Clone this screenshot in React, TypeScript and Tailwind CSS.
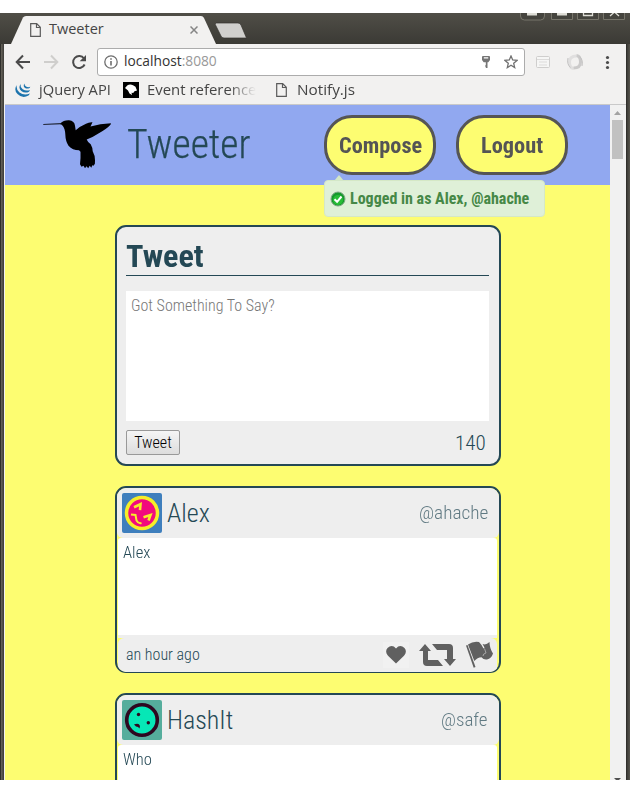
import { useLayoutEffect, useRef, useState } from "react";
import type { ReactNode } from "react";

// Fits one line of text to a given width by condensing its glyphs.
function Fit({ w, className = "", children }: { w: number; className?: string; children: ReactNode }) {
  const ref = useRef<HTMLSpanElement>(null);
  const [scale, setScale] = useState(1);
  useLayoutEffect(() => {
    if (ref.current) setScale(w / ref.current.offsetWidth);
  }, [w]);
  return (
    <span className="block shrink-0 whitespace-nowrap" style={{ width: w }}>
      <span ref={ref} className={"inline-block origin-left align-top " + className} style={{ transform: `scaleX(${scale})` }}>
        {children}
      </span>
    </span>
  );
}

const PageIcon = () => (
  <svg width="11" height="14" viewBox="0 0 11 14" className="shrink-0" fill="none" stroke="#5a5a5a" strokeWidth="1.2">
    <path d="M.7.7h6l3.6 3.6v9H.7zM6.5.9v3.6h3.6" />
  </svg>
);

function TitleBar() {
  return (
    <div className="relative h-[31px] bg-linear-to-b from-[#504e47] to-[#3b3a35]">
      <svg className="absolute left-0 top-0" width="630" height="31" viewBox="0 13 630 31">
        <path d="M11 44L23 17.500Q24 16 26 16H201Q203 16 204 18L216 44Z" fill="#f2f1f0" />
        <path d="M216 23H238Q240 23 241 25L246.500 38H224Q221.500 38 221 36L215 24Z" fill="#d0cfcd" stroke="#33322e" strokeWidth=".7" />
        <g fill="#45443e" stroke="#77756b" strokeWidth="1">
          <path d="M520.500 12v4q0 4 4 4h16q4 0 4-4v-4" />
          <path d="M551.500 12v7.500h21V12M577.500 12v7.500h21V12M603.500 12v7.500h21V12" />
        </g>
        <path d="M527 13h10v2.500h-10zM557 13h10v2.500h-10z" fill="#deddd6" />
        <path d="M583.500 12v3.500h9V12M610 16l4.500-4 4.500 4" fill="none" stroke="#deddd6" strokeWidth="1.300" />
      </svg>
      <div className="relative flex h-[33px] items-center pl-[30px]">
        <PageIcon />
        <div className="w-2" />
        <Fit w={55} className="translate-y-px text-[14.5px] leading-[20px] text-[#454545]">Tweeter</Fit>
        <svg className="ml-[86px]" width="8" height="8" viewBox="0 0 8 8" stroke="#858585" strokeWidth="1.500">
          <path d="M.5.5l7 7M7.500.5l-7 7" />
        </svg>
      </div>
    </div>
  );
}

function Toolbar() {
  return (
    <div className="h-[61px] border-b border-[#c9c9c9] bg-[#f2f1f0]">
      <div className="flex h-[36px] items-center">
        <svg width="92" height="28" viewBox="5 48 92 28" className="shrink-0" fill="none" strokeWidth="2">
          <path d="M30 62H17M23 55.500L16.700 62l6.300 6.500" stroke="#4b4b4b" />
          <path d="M44 62h13M51 55.500l6.300 6.500-6.300 6.500" stroke="#cfcecc" />
          <path d="M84 58.500a6 6 0 1 0 .6 6" stroke="#4b4b4b" />
          <path d="M86 55v6.300h-6.300z" fill="#4b4b4b" />
        </svg>
        <div className="flex h-[28px] w-[428px] shrink-0 items-center rounded-[3px] border border-[#acacac] bg-white pl-[6px] pr-[6px]">
          <svg width="14" height="14" viewBox="0 0 14 14" className="shrink-0" fill="none" stroke="#6e6e6e" strokeWidth="1.300">
            <circle cx="7" cy="7" r="6.200" />
            <path d="M7 6v4.500M7 3.300v1.500" strokeWidth="1.600" />
          </svg>
          <div className="w-[6px]" />
          <Fit w={93} className="translate-y-px text-[14.5px] leading-[20px] text-[#333]">localhost<span className="text-[#999]">:8080</span></Fit>
          <div className="flex-1" />
          <svg width="8" height="13" viewBox="0 0 8 13" fill="#757575">
            <path fillRule="evenodd" d="M1 0h6q1 0 1 1v3L6.300 6.200H5.500V12H3.800v-1.500H3V9.500h.8V6.200H1.700L0 4V1q0-1 1-1zm.8 1.200v1.200h4.400V1.200z" />
          </svg>
          <svg className="ml-[14px]" width="14" height="14" viewBox="0 0 14 14" fill="none" stroke="#707070" strokeWidth="1.300">
            <path d="M7 1l1.700 4 4.300.4-3.300 2.900 1 4.300L7 10.300l-3.700 2.300 1-4.300L1 5.400 5.300 5z" />
          </svg>
        </div>
        <svg width="96" height="28" viewBox="525 48 96 28" className="shrink-0">
          <rect x="536.500" y="56.500" width="13" height="11" rx="1" fill="#f6f6f5" stroke="#cfcecd" />
          <path d="M537 59.500h12M539 62h8M539 65h8" stroke="#dcdbda" />
          <g fill="none" stroke="#e0dfdf" strokeWidth="3">
            <path d="M576.500 56q-7 0-7 6t4 6.500" />
            <path d="M573.500 68q7 0 7-6t-4-6.500" stroke="#cbcaca" />
          </g>
          <path d="M568 58q-1.500 6 2.500 9.500M582 66q1.500-6-2.500-9.500" fill="none" stroke="#c3c2c2" />
          <g fill="#4b4b4b"><circle cx="607.500" cy="57.500" r="1.600" /><circle cx="607.500" cy="62.500" r="1.600" /><circle cx="607.500" cy="67.500" r="1.600" /></g>
        </svg>
      </div>
      <div className="flex h-[20px] items-center pl-[10px] text-[14.5px] leading-[20px] text-[#454545]">
        <svg width="16" height="15" viewBox="0 0 16 15" fill="#1d74ad">
          <path d="M1.700 2Q-1.500 7 2.500 11q5 5 11 1.500l1.500-2Q9 13 4.500 9.500 1 6.500 1.700 2z" />
          <path d="M5.500 1Q3 5 6.300 8q3.700 2.800 7.700.700l1-1.700Q11 8.500 7.700 6.200 5 4 5.500 1z" />
          <path d="M9.500.5Q7.700 3.200 10 4.900q2.300 1.300 4.500.1l.8-1.200Q13 4.600 11 3.500 9.300 2.300 9.500.5z" />
        </svg>
        <div className="w-[8px]" />
        <Fit w={72}>jQuery API</Fit>
        <svg className="ml-[12px]" width="16" height="16" viewBox="0 0 16 16">
          <path d="M0 0h16v16H0z" />
          <path d="M2 6l2.200-2.500Q7 1.700 10 3.300l2.500 1.500 1.500 3.700-2.500.7-1.300 1.800-1.700-.3.500 2.300-2.500-1.500L5 8.500z" fill="#fff" />
        </svg>
        <div className="w-[8px]" />
        <div className="mask-r-from-75% mask-r-to-100%"><Fit w={109}>Event reference</Fit></div>
        <div className="w-[20px]" />
        <PageIcon />
        <div className="w-[10px]" />
        <Fit w={58}>Notify.js</Fit>
      </div>
    </div>
  );
}

function HeaderButton({ label, w }: { label: string; w: number }) {
  return (
    <div className="flex h-[60px] w-[112px] items-center justify-center rounded-[28px] border-3 border-[#555] bg-[#fdfd71] text-[22px] font-bold text-[#555]">
      <Fit w={w}>{label}</Fit>
    </div>
  );
}

function Header() {
  return (
    <header className="relative flex h-[80px] items-center bg-[#91a8f0]">
      <svg className="ml-[37px] shrink-0" width="72" height="52" viewBox="42 117.800 72 52">
        <path d="M43 122.800L60.500 122Q63.500 118.800 69 119Q74.500 119.500 75 124.500L75.700 129Q80 125 86 122.500Q89 120.700 92.500 121L90.500 125.200Q100 122.500 111 122L110.500 123.500Q107 127.500 98 132.500Q92 136.500 86.700 138.200Q87.500 140.500 90.700 143Q92.500 146 92.700 150Q95 154 95 159L94.900 162.500L93.500 164.500L92.300 164L91.300 166.500L89.700 164.500L88.200 167L86.500 165L85 167L83.500 164.500L81.500 165.500L80 163Q80.800 157 80.500 150.500L79 149Q72.500 149 68.500 144.500Q65.500 140 65.300 133Q65 127.500 63 125Q62 123.300 60 123.100L43.500 123.500Z" />
      </svg>
      <div className="w-[13px]" />
      <Fit w={124} className="text-[40px] leading-[78px] font-light text-[#244855] [-webkit-text-stroke:0.25px_#244855]">Tweeter</Fit>
      <div className="ml-[73px] flex gap-5">
        <HeaderButton label="Compose" w={83} />
        <HeaderButton label="Logout" w={62} />
      </div>
      <div className="absolute left-[319px] top-[70px]">
        <div className="ml-[10px] h-[6px] w-[10px] bg-[#d3e7c7] [clip-path:polygon(50%_0,100%_100%,0_100%)]" />
        <div className="-mt-px flex h-[37px] w-[221px] items-center rounded-[4px] border border-[#d5e8c6] bg-[#dff0d8] pl-[5px] text-[16px] font-bold text-[#468847]">
          <svg width="16" height="16" viewBox="0 0 16 16" className="shrink-0">
            <circle cx="8" cy="8" r="7" fill="#159a2c" stroke="#7fa886" />
            <circle cx="8" cy="9" r="5" fill="#27bd37" />
            <path d="M4.500 8.200l2.600 2.600 4.400-5.300" fill="none" stroke="#fff" strokeWidth="2" />
          </svg>
          <div className="w-[4px]" />
          <Fit w={179}>Logged in as Alex, @ahache</Fit>
        </div>
      </div>
    </header>
  );
}

const AlexAvatar = () => (
  <svg width="40" height="40" viewBox="0 0 40 40" className="shrink-0 rounded-[2px]">
    <path fill="#3f7fbd" d="M0 0h40v40H0z" />
    <circle cx="20" cy="20" r="15.500" fill="#f20a7d" stroke="#f6ed28" strokeWidth="3.500" />
    <g fill="none" stroke="#f6ed28">
      <path d="M12 14.200l6.500-3-.5 6" strokeWidth="2.600" />
      <path d="M21.500 24.200l7-2.200-2 5.500" strokeWidth="2.600" />
      <path d="M9 21.500l4.500.5 1 5.500q2 3.500 5 2.500" strokeWidth="2" />
    </g>
  </svg>
);

const HashAvatar = () => (
  <svg width="40" height="40" viewBox="0 0 40 40" className="shrink-0 rounded-[2px]">
    <path fill="#55ad9c" d="M0 0h40v40H0z" />
    <circle cx="20" cy="20" r="15.300" fill="#06e7b6" stroke="#2d0820" strokeWidth="3.600" />
    <g fill="#2d0820">
      <circle cx="16.500" cy="14.500" r="1.700" />
      <circle cx="26.300" cy="22.800" r="1.700" />
      <path d="M12 24.500q5-2 6 1.500l-.5 2.500-1.500-1.500q-2 0-4-2.500z" />
    </g>
  </svg>
);

interface TweetProps {
  avatar: ReactNode;
  name: string;
  nameW: number;
  handle: string;
  handleW: number;
  body: string;
  bodyW: number;
  age?: string;
}

function TweetFooter({ age }: { age: string }) {
  return (
    <>
      <div className="ml-px mr-[2px] h-[3px] bg-[#eee]" />
      <div className="ml-px mr-[2px] flex h-[35px] rounded-t-[6px] bg-[#eee] pl-[8px]">
        <Fit w={74} className="text-[16px] leading-[33px] font-light text-[#244855]">{age}</Fit>
        <svg className="ml-auto mr-px shrink-0" width="114" height="33" viewBox="382 638 114 33" fill="#606060">
          <path d="M383 642h26v26h-26z" fill="#f1f1f1" />
          <path d="M396 663.500L388 655.800Q384.500 651.500 387.500 648Q392 644 396 648.500Q400 644 404.500 648Q407.500 651.500 404 655.800Z" />
          <path d="M425 644l6 7h-3v9h10l5 6h-16q-4 0-4-4v-11h-4z" />
          <path d="M432 644h17q4 0 4 4v11h3l-6 7-6-7h3v-9h-10z" />
          <path d="M466 645.500l1.500-.5 8 22-1.800.7z" />
          <path d="M468 644.500Q473 641 479 642Q481.500 644.500 483.500 648.500L484.500 647.500L482.500 644Q486 645.500 489.500 642Q489.500 648 493 653.500Q491.500 658.500 487 659.500Q483.500 660 481.500 657.200Q477.500 657.200 474.300 661Z" />
          <path d="M484.500 648.500l1.500 4.500q-3 .5-3 3" fill="none" stroke="#b5b5b5" strokeWidth=".8" />
        </svg>
      </div>
    </>
  );
}

function Tweet({ avatar, name, nameW, handle, handleW, body, bodyW, age }: TweetProps) {
  return (
    <article className="h-[187px] w-[386px] shrink-0 overflow-hidden rounded-[11px] border-2 border-b-[1.5px] border-[#244855]">
      <div className="flex h-[50px] items-center rounded-b-[6px] bg-[#eee] pl-[5px] pr-[11px]">
        {avatar}
        <div className="w-[5px]" />
        <Fit w={nameW} className="text-[26px] font-light text-[#244855]">{name}</Fit>
        <div className="flex-1" />
        <Fit w={handleW} className="text-[19px] font-light text-[#244855] opacity-70">{handle}</Fit>
      </div>
      <div className="ml-px mr-[2px] h-[97px] rounded-t-[3px] bg-white pl-[5px] pt-[5px]">
        <Fit w={bodyW} className="text-[16px] leading-[19px] font-light text-[#244855]">{body}</Fit>
      </div>
      {age && <TweetFooter age={age} />}
    </article>
  );
}

export default function App() {
  return (
    <div className="h-[793px] w-[630px] overflow-hidden bg-white pt-[13px] font-['Open_Sans','Noto_Sans',sans-serif]">
      <div className="h-[767px] overflow-hidden bg-[#3c3b37]">
        <TitleBar />
        <div className="flex h-[736px]">
          <div className="w-[4px] shrink-0 border-l border-[#302f2c] bg-linear-to-r from-[#69665d] to-[#3c3b37]" />
          <div className="w-[622px] shrink-0 bg-[#f2f1f0] pl-px">
            <Toolbar />
            <div className="flex h-[675px]">
              <main className="h-[675px] w-[605px] shrink-0 overflow-hidden bg-[#fdfd71] font-['Roboto_Condensed',Roboto,sans-serif] font-stretch-75%">
                <Header />
                <div className="flex flex-col items-start pl-[110px] pt-[40px]">
                  <section className="h-[241px] w-[386px] shrink-0 rounded-[11px] border-2 border-[#244855] bg-[#eee] px-[9px] pt-[12px]">
                    <div className="mr-px h-[37px] border-b border-[#244855]">
                      <Fit w={78} className="text-[30.5px] leading-[35px] font-bold text-[#244855]">Tweet</Fit>
                    </div>
                    <div className="mr-px mt-[15px] h-[130px] bg-white pl-[5px] pt-[5px]">
                      <Fit w={144} className="text-[16px] leading-[19px] font-light text-[#777]">Got Something To Say?</Fit>
                    </div>
                    <div className="mt-[9px] flex h-[25px] items-center justify-between pr-[4px]">
                      <button className="flex h-[25px] w-[54px] items-center justify-center rounded-[2px] border border-[#999] bg-linear-to-b from-[#f5f5f5] to-[#ddd]">
                        <Fit w={38} className="text-[16px] leading-[23px] text-black font-light">Tweet</Fit>
                      </button>
                      <Fit w={31} className="text-[21px] leading-[28px] font-light text-[#244855]">140</Fit>
                    </div>
                  </section>
                  <div className="mt-[20px] flex flex-col gap-5">
                    <Tweet avatar={<AlexAvatar />} name="Alex" nameW={43} handle="@ahache" handleW={69} body="Alex" bodyW={27} age="an hour ago" />
                    <Tweet avatar={<HashAvatar />} name="HashIt" nameW={66} handle="@safe" handleW={47} body="Who" bodyW={29} />
                  </div>
                </div>
              </main>
              <div className="flex w-[16px] shrink-0 flex-col items-center bg-[#f1f1f1]">
                <svg width="16" height="15" viewBox="0 0 16 15"><path d="M4 10l3.500-4 3.500 4z" fill="#a3a3a3" /></svg>
                <div className="mr-px h-[39px] w-[11px] bg-[#c1c1c1]" />
                <svg className="mt-auto" width="16" height="2" viewBox="0 0 16 2"><path d="M4 0h7L9 2H6z" fill="#505050" /></svg>
              </div>
            </div>
          </div>
          <div className="w-[4px] shrink-0 border-l border-[#302f2c] bg-linear-to-r from-[#3c3b37] to-[#57554d]" />
        </div>
      </div>
    </div>
  );
}
